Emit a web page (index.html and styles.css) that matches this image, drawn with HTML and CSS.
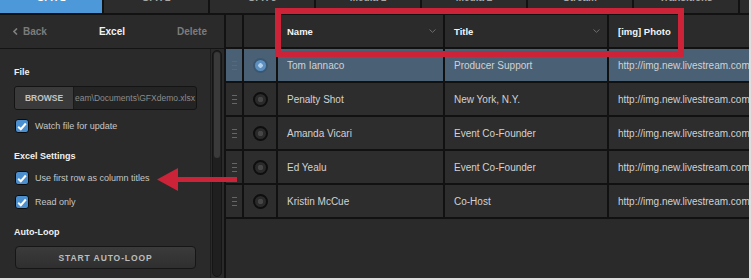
FILE: index.html
```html
<!DOCTYPE html>
<html lang="en">
<head>
    <meta charset="UTF-8">
    <title>Excel Data Source</title>
    <link rel="stylesheet" href="styles.css">
</head>
<body>
    <div class="app">
        <nav class="tabs">
            <div class="tab active"><span>GFX 1</span></div>
            <div class="tab"><span>GFX 2</span></div>
            <div class="tab"><span>GFX 3</span></div>
            <div class="tab"><span>Media 1</span></div>
            <div class="tab"><span>Media 2</span></div>
            <div class="tab"><span>Stream</span></div>
            <div class="tab"><span>Transitions</span></div>
            <div class="tab"></div>
        </nav>

        <div class="main">
            <aside class="panel">
                <header class="panel-head">
                    <span class="back">
                        <svg width="5" height="7" viewBox="0 0 5 7"><polyline points="4,0.5 1,3.5 4,6.5" fill="none" stroke="#808080" stroke-width="1.6"/></svg>
                        Back
                    </span>
                    <span class="panel-title">Excel</span>
                    <span class="delete">Delete</span>
                </header>
                <div class="panel-body">
                    <div class="panel-content">
                        <h3 class="label">File</h3>
                        <div class="file-input">
                            <span class="browse">BROWSE</span>
                            <span class="path">eam\Documents\GFXdemo.xlsx</span>
                        </div>
                        <div class="check-row first">
                            <span class="check"><svg width="10" height="9" viewBox="0 0 10 9"><polyline points="1.2,4.8 3.8,7.2 8.8,1.5" fill="none" stroke="#fff" stroke-width="2"/></svg></span>
                            Watch file for update
                        </div>

                        <h3 class="label section">Excel Settings</h3>
                        <div class="check-row first">
                            <span class="check"><svg width="10" height="9" viewBox="0 0 10 9"><polyline points="1.2,4.8 3.8,7.2 8.8,1.5" fill="none" stroke="#fff" stroke-width="2"/></svg></span>
                            Use first row as column titles
                        </div>
                        <div class="check-row">
                            <span class="check"><svg width="10" height="9" viewBox="0 0 10 9"><polyline points="1.2,4.8 3.8,7.2 8.8,1.5" fill="none" stroke="#fff" stroke-width="2"/></svg></span>
                            Read only
                        </div>

                        <h3 class="label section">Auto-Loop</h3>
                        <button class="loop-btn">START AUTO-LOOP</button>
                    </div>
                    <div class="scroll">
                        <div class="track"><div class="thumb"></div></div>
                    </div>
                </div>
            </aside>

            <section class="table">
                <div class="grid">
                    <div class="cell head"></div>
                    <div class="cell head"></div>
                    <div class="cell head col">Name <svg class="chev" width="7" height="4" viewBox="0 0 7 4"><polyline points="0.5,0.5 3.5,3.3 6.5,0.5" fill="none" stroke="#6e6e6e" stroke-width="1"/></svg></div>
                    <div class="cell head col">Title <svg class="chev" width="7" height="4" viewBox="0 0 7 4"><polyline points="0.5,0.5 3.5,3.3 6.5,0.5" fill="none" stroke="#6e6e6e" stroke-width="1"/></svg></div>
                    <div class="cell head col">[img] Photo</div>

                    <div class="cell handle sel"><i></i></div>
                    <div class="cell sel"><span class="radio on"></span></div>
                    <div class="cell text sel">Tom Iannaco</div>
                    <div class="cell text sel">Producer Support</div>
                    <div class="cell text sel">http://img.new.livestream.com/</div>

                    <div class="cell handle"><i></i></div>
                    <div class="cell"><span class="radio"></span></div>
                    <div class="cell text">Penalty Shot</div>
                    <div class="cell text">New York, N.Y.</div>
                    <div class="cell text">http://img.new.livestream.com/</div>

                    <div class="cell handle"><i></i></div>
                    <div class="cell"><span class="radio"></span></div>
                    <div class="cell text">Amanda Vicari</div>
                    <div class="cell text">Event Co-Founder</div>
                    <div class="cell text">http://img.new.livestream.com/</div>

                    <div class="cell handle"><i></i></div>
                    <div class="cell"><span class="radio"></span></div>
                    <div class="cell text">Ed Yealu</div>
                    <div class="cell text">Event Co-Founder</div>
                    <div class="cell text">http://img.new.livestream.com/</div>

                    <div class="cell handle"><i></i></div>
                    <div class="cell"><span class="radio"></span></div>
                    <div class="cell text">Kristin McCue</div>
                    <div class="cell text">Co-Host</div>
                    <div class="cell text">http://img.new.livestream.com/</div>
                </div>
            </section>
        </div>

        <!-- callouts drawn over the screenshot -->
        <div class="highlight"></div>
        <svg class="arrow" width="82" height="26" viewBox="0 0 82 26">
            <polygon points="1,12.5 22,1 22,10 81,10 81,15 22,15 22,24" fill="#cc2338"/>
        </svg>
    </div>
</body>
</html>
```

FILE: styles.css
```css
/* Reset & Global Styles */
* {
    margin: 0;
    padding: 0;
    box-sizing: border-box;
}
body {
    background: #dedede;
    font-family: 'Liberation Sans', Arial, sans-serif;
}
.app {
    position: relative;
    width: 749px;
    height: 278px;
    background: #2a2a2a;
    overflow: hidden;
}

/* Top tabs */
.tabs {
    display: flex;
    gap: 2px;
    height: 15px;
    background: #121212;
    border-bottom: 2px solid #121212;
    overflow: hidden;
}
.tab {
    flex: 0 0 104px;
    background: #2c2c2c;
    color: #a8a8a8;
    text-align: center;
    font-size: 10px;
    font-weight: bold;
    overflow: hidden;
}
.tab span {
    display: block;
    line-height: 12px;
    margin-top: -8px;
}
.tab.active {
    flex-basis: 102px;
    background: #4c98d8;
    color: #fff;
}

.main {
    display: flex;
    height: 263px;
}

/* Left panel */
.panel {
    width: 226px;
    flex: 0 0 226px;
    border-right: 2px solid #121212;
    display: flex;
    flex-direction: column;
}
.panel-head {
    height: 34px;
    flex: 0 0 34px;
    display: flex;
    justify-content: space-between;
    align-items: center;
    padding: 0 17px 0 13px;
    border-bottom: 1px solid #141414;
    background: #2a2a2a;
    font-size: 10px;
    font-weight: bold;
    color: #7c7c7c;
}
.back {
    display: flex;
    align-items: center;
    gap: 5px;
}
.panel-title {
    color: #f2f2f2;
}
.panel-body {
    flex: 1;
    display: flex;
    min-height: 0;
}
.panel-content {
    flex: 0 0 211px;
    padding: 17px 0 0 14px;
    border-right: 1px solid #1c1c1c;
}
.label {
    font-size: 9px;
    font-weight: bold;
    line-height: 12px;
    color: #f0f0f0;
}
.label.section {
    margin-top: 17px;
}
.file-input {
    display: flex;
    width: 183px;
    height: 24px;
    margin-top: 8px;
    border: 1px solid #141414;
    border-radius: 3px;
    overflow: hidden;
    background: #242424;
}
.browse {
    flex: 0 0 59px;
    display: flex;
    align-items: center;
    justify-content: center;
    background: #3a3a3a;
    border-right: 1px solid #1a1a1a;
    color: #c4c4c4;
    font-size: 8.5px;
    font-weight: bold;
}
.path {
    flex: 1;
    display: flex;
    align-items: center;
    overflow: hidden;
    padding-left: 1px;
    color: #8c8c8c;
    font-size: 8.5px;
    white-space: nowrap;
}
.check-row {
    display: flex;
    align-items: center;
    gap: 6px;
    height: 14px;
    margin-top: 10px;
    padding-left: 1px;
    font-size: 9px;
    color: #c6c6c6;
}
.check-row.first {
    margin-top: 9px;
}
.check {
    width: 14px;
    height: 14px;
    display: flex;
    align-items: center;
    justify-content: center;
    background: #4b8fcf;
    border: 1.5px solid #0c0c0c;
    border-radius: 3px;
}
.loop-btn {
    display: block;
    width: 181px;
    height: 23px;
    margin: 8px 0 0 1px;
    border: 1px solid #161616;
    border-radius: 4px;
    background: linear-gradient(#3b3b3b, #2f2f2f);
    color: #bdbdbd;
    font-family: inherit;
    font-size: 8.5px;
    font-weight: bold;
    letter-spacing: 0.9px;
}
.scroll {
    flex: 1;
    padding: 1px 2px 1px 1px;
}
.track {
    height: 100%;
    border: 1px solid #151515;
    border-radius: 5px;
    background: #1f1f1f;
    padding: 1px;
}
.thumb {
    height: 106px;
    border-radius: 4px;
    background: #3a3a3a;
}

/* Data table */
.table {
    flex: 1;
    overflow: hidden;
}
.grid {
    display: grid;
    grid-template-columns: 16px 32px 165px 162px 1fr;
    grid-auto-rows: 32px;
    gap: 2px;
    background: #111;
    border-bottom: 2px solid #111;
}
.cell {
    background: #2d2d2d;
    display: flex;
    align-items: center;
    justify-content: center;
    overflow: hidden;
}
.cell.head {
    background: #2b2b2b;
}
.cell.col {
    justify-content: space-between;
    padding: 0 7px 0 9px;
    color: #f4f4f4;
    font-size: 9.5px;
    font-weight: bold;
}
.cell.text {
    justify-content: flex-start;
    padding-left: 9px;
    color: #d2d2d2;
    font-size: 10px;
    white-space: nowrap;
}
.cell.sel {
    background: #4a6075;
}
.handle i {
    width: 5px;
    height: 9px;
    background: repeating-linear-gradient(#666 0 1px, transparent 1px 4px);
}
.radio {
    width: 15px;
    height: 15px;
    border-radius: 50%;
    border: 2px solid #0e0e0e;
    background: radial-gradient(circle, #464646 0 2.5px, #2a2a2a 3px);
}
.radio.on {
    border-color: #3b5770;
    background: radial-gradient(circle, #b4cfe8 0 2px, #5d8fbf 2.5px);
}

/* Callouts */
.highlight {
    position: absolute;
    left: 275px;
    top: 8px;
    width: 409px;
    height: 49px;
    border: 6px solid #cc2338;
}
.arrow {
    position: absolute;
    left: 156px;
    top: 167px;
}
```
